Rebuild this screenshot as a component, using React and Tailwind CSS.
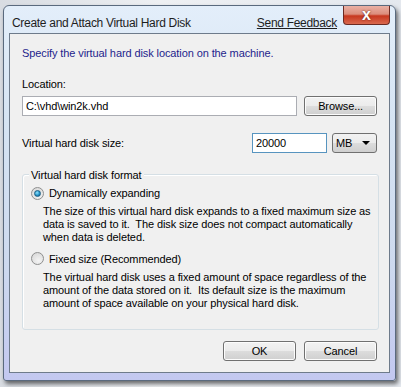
import React, { useState } from 'react'

const font = { fontFamily: '"Liberation Sans", Arial, sans-serif' }

const WinButton = ({ children, className = "" }) => (
  <button className={`h-[20px] rounded-[3px] border border-[#707070] bg-[linear-gradient(#f2f2f2_0%,#ebebeb_50%,#dddddd_50%,#cfcfcf_100%)] text-[11px] text-black shadow-[inset_0_0_0_1px_#fcfcfc] ${className}`}>
    {children}
  </button>
)

const Radio = ({ checked, onClick, label }) => (
  <label className="flex items-center gap-[5px] cursor-pointer" onClick={onClick}>
    <span className="flex h-[13px] w-[13px] items-center justify-center rounded-full border border-[#8e8f8f] bg-[radial-gradient(circle_at_60%_70%,#f4f4f4,#d4d4d4)]">
      {checked && (
        <span className="h-[7px] w-[7px] rounded-full border border-[#1d5f84] bg-[radial-gradient(circle_at_40%_35%,#8fe4ff,#1f8ec4_60%,#0b4d7a)]"></span>
      )}
    </span>
    <span>{label}</span>
  </label>
)

const App = () => {
  const [format, setFormat] = useState("dynamic")
  const [path, setPath] = useState("C:\\vhd\\win2k.vhd")
  const [size, setSize] = useState("20000")

  return (
    <div className="h-[387px] w-[401px] overflow-hidden bg-[linear-gradient(90deg,#d8dce2,#eef0f3_40%,#e4e8ee)] pl-[3px] pt-[5px] text-[11px] tracking-[-0.1px] text-black" style={font}>
      <div className="flex h-[376px] w-[393px] flex-col rounded-t-[6px] rounded-b-[3px] border border-[#5a6a7e] bg-[linear-gradient(#e3eefa,#d6e4f3_30%,#cdd9ee_70%,#c3c8f0)] shadow-[2px_3px_4px_rgba(0,0,0,0.55)]">
        <div className="flex h-[27px] items-start">
          <div className="pl-[8px] pt-[8px] text-[12px] tracking-[-0.3px] text-[#1e1e1e]">Create and Attach Virtual Hard Disk</div>
          <a className="ml-auto mr-[6px] pt-[8px] text-[12px] tracking-[-0.3px] text-[#1e1e1e] underline">Send Feedback</a>
          <div className="mr-[5px] flex h-[19px] w-[47px] items-center justify-center rounded-b-[4px] border border-t-0 border-[#6b2a22] bg-[linear-gradient(#eab0a4,#dc8e7c_45%,#c7381f_55%,#d9694f)]">
            <span className="text-[16px] font-bold leading-none text-white [text-shadow:0_0_2px_#5a1a10]">x</span>
          </div>
        </div>
        <div className="mx-[5px] mb-[7px] flex flex-1 flex-col border border-[#6e7b8b] bg-[#f0f0f0] px-[12px] pt-[11px]">
          <div className="h-[15px] text-[#1e1e8c]">Specify the virtual hard disk location on the machine.</div>

          <div className="mt-[16px] h-[14px]">Location:</div>
          <div className="mt-[6px] flex items-center gap-[7px]">
            <input value={path} onChange={(e) => setPath(e.target.value)} className="h-[20px] w-[276px] border border-[#abadb3] bg-white px-[3px] text-[11px] outline-none" />
            <WinButton className="w-[73px]">Browse...</WinButton>
          </div>

          <div className="mt-[17px] flex items-center">
            <span>Virtual hard disk size:</span>
            <input value={size} onChange={(e) => setSize(e.target.value)} className="ml-auto h-[20px] w-[75px] border border-[#5794bf] bg-white px-[3px] text-[11px] outline-none" />
            <div className="ml-[5px] flex h-[20px] w-[45px] items-center rounded-[3px] border border-[#707070] bg-[linear-gradient(#f2f2f2_0%,#ebebeb_50%,#dddddd_50%,#cfcfcf_100%)] pl-[3px] pr-[6px]">
              <span>MB</span>
              <span className="ml-auto h-0 w-0 border-x-[4px] border-t-[4px] border-x-transparent border-t-black"></span>
            </div>
          </div>

          <div className="relative mt-[21px] h-[156px] w-[357px] rounded-[3px] border border-[#d5dfe5] px-[8px] pt-[10px] shadow-[inset_1px_1px_0_#ffffff]">
            <span className="absolute -top-[8px] left-[6px] bg-[#f0f0f0] px-[2px]">Virtual hard disk format</span>
            <Radio checked={format === "dynamic"} onClick={() => setFormat("dynamic")} label="Dynamically expanding" />
            <p className="mt-[3px] whitespace-nowrap pl-[12px] leading-[13px]">
              The size of this virtual hard disk expands to a fixed maximum size as<br />
              data is saved to it.&nbsp; The disk size does not compact automatically<br />
              when data is deleted.
            </p>
            <div className="mt-[7px]">
              <Radio checked={format === "fixed"} onClick={() => setFormat("fixed")} label="Fixed size (Recommended)" />
            </div>
            <p className="mt-[4px] whitespace-nowrap pl-[12px] leading-[13px]">
              The virtual hard disk uses a fixed amount of space regardless of the<br />
              amount of the data stored on it.&nbsp; Its default size is the maximum<br />
              amount of space available on your physical hard disk.
            </p>
          </div>

          <div className="mt-[11px] flex justify-end gap-[8px]">
            <WinButton className="w-[73px]">OK</WinButton>
            <WinButton className="w-[73px]">Cancel</WinButton>
          </div>
        </div>
      </div>
    </div>
  )
}

export default App
